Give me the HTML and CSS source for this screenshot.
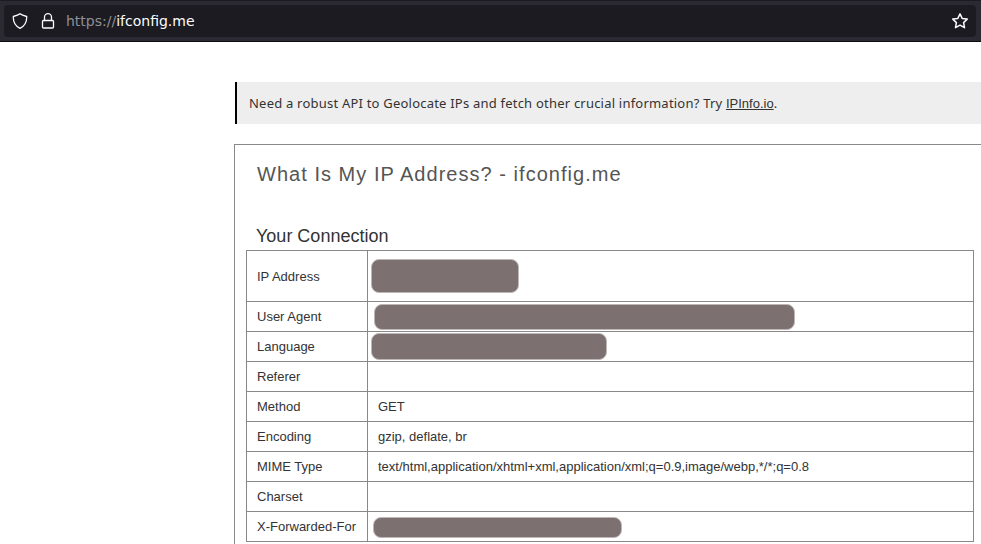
FILE: index.html
```html
<!DOCTYPE html>
<html lang="en">
<head>
<meta charset="utf-8">
<title>What Is My IP Address? - ifconfig.me</title>
<link rel="stylesheet" href="styles.css">
</head>
<body>
<header class="toolbar">
  <div class="urlbar">
    <svg class="icon" width="16" height="16" viewBox="0 0 16 16"><path d="M8 .8C6.500 2.100 3.900 2.900 1.300 3.500 1.100 8.500 3.300 13 8 15.300 12.700 13 14.900 8.500 14.700 3.500 12.100 2.900 9.500 2.100 8 .8z"/></svg>
    <svg class="icon lock" width="16" height="16" viewBox="0 0 16 16"><path d="M4.500 7.500V4.200a3.500 3.500 0 0 1 7 0v3.300"/><rect x="2.500" y="7.500" width="11" height="7.500" rx="1"/></svg>
    <span class="url"><span class="scheme">https://</span>ifconfig.me</span>
    <svg class="icon star" width="16" height="16" viewBox="0 0 16 16"><path d="M8 .9l2.200 4.500 5 .7-3.600 3.500.9 5.100L8 12.200l-4.500 2.500.9-5.100L.8 6.100l5-.7z"/></svg>
  </div>
</header>
<main class="page">
  <p class="notice">Need a robust API to Geolocate IPs and fetch other crucial information? Try <a href="#">IPInfo.io</a>.</p>
  <section class="panel">
    <h1>What Is My IP Address? - ifconfig.me</h1>
    <h2>Your Connection</h2>
    <table>
      <tr class="tall"><th>IP Address</th><td class="masked"><div class="mask ip"></div></td></tr>
      <tr><th>User Agent</th><td class="masked"><div class="mask agent"></div></td></tr>
      <tr><th>Language</th><td class="masked"><div class="mask language"></div></td></tr>
      <tr><th>Referer</th><td></td></tr>
      <tr><th>Method</th><td>GET</td></tr>
      <tr><th>Encoding</th><td>gzip, deflate, br</td></tr>
      <tr><th>MIME Type</th><td>text/html,application/xhtml+xml,application/xml;q=0.9,image/webp,*/*;q=0.8</td></tr>
      <tr><th>Charset</th><td></td></tr>
      <tr><th>X-Forwarded-For</th><td class="masked"><div class="mask forwarded"></div></td></tr>
    </table>
  </section>
</main>
</body>
</html>
```
FILE: styles.css
```css
* { box-sizing: border-box; }
html { overflow: hidden; }
body {
  margin: 0;
  height: 544px;
  overflow: hidden;
  background: #fff;
  color: #333;
  font: 13px/19px "Liberation Sans", Arial, sans-serif;
}
.toolbar {
  height: 42px;
  padding: 4px 5px 4px 4px;
  background: #2b2a33;
  border-top: 1px solid #1c1b22;
  border-bottom: 1px solid #0c0c0d;
}
.urlbar {
  display: flex;
  align-items: center;
  height: 32px;
  padding: 0 8px;
  border-radius: 4px;
  background: #1c1b22;
}
.icon {
  fill: none;
  stroke: #fbfbfe;
  stroke-width: 1.3;
  stroke-linejoin: round;
  stroke-linecap: round;
}
.lock { margin-left: 12px; }
.url {
  margin-left: 10px;
  color: #fbfbfe;
  font: 14px/20px "DejaVu Sans", sans-serif;
}
.scheme { color: #8f8f96; }
.star { margin-left: auto; stroke-width: 1.5; }
.page {
  width: 752px;
  margin-left: 234px;
  padding-top: 40px;
}
.notice {
  height: 42px;
  margin: 0 0 20px 1px;
  padding-left: 12px;
  border-left: 2px solid #000;
  background: #eee;
  font: 400 13px/42px "Noto Sans", sans-serif;
  letter-spacing: .213px;
  white-space: nowrap;
}
.notice a {
  color: #333;
  font: 13px "Liberation Sans", Arial, sans-serif;
  letter-spacing: 0;
}
.panel {
  height: 420px;
  padding: 0 11px;
  border: 1px solid #888;
}
h1 {
  margin: 17px 0 0 11px;
  color: #555;
  font-size: 20px;
  font-weight: 400;
  line-height: 24px;
  letter-spacing: 1.03px;
}
h2 {
  margin: 39px 0 3px 10px;
  font-size: 18px;
  font-weight: 400;
  line-height: 22px;
}
table {
  width: 728px;
  table-layout: fixed;
  border-collapse: collapse;
}
tr { height: 30px; }
.tall { height: 51px; }
th, td {
  padding: 0 10px;
  border: 1px solid #888;
  font-weight: 400;
  text-align: left;
  vertical-align: middle;
  white-space: nowrap;
}
th { width: 121px; }
td.masked { padding: 0 3px; }
.mask {
  border: 1px solid #bdb8b7;
  border-radius: 8px;
  background: #7c7170;
}
.ip { width: 148px; height: 34px; }
.agent { width: 421px; height: 26px; margin-left: 3px; }
.language { width: 236px; height: 27px; }
.forwarded { width: 249px; height: 21px; margin: 2px 0 0 2px; }
```
